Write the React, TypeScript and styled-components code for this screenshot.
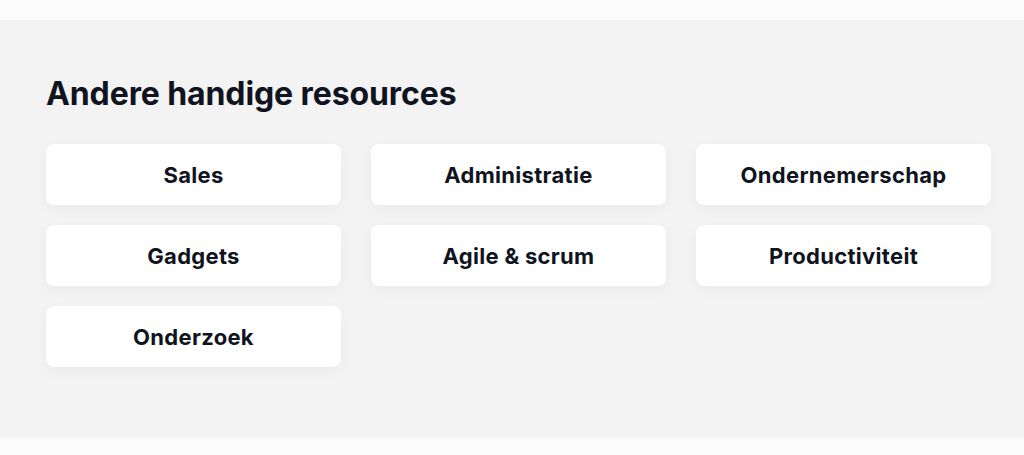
import React from 'react'
import styled, { createGlobalStyle } from 'styled-components'

const GlobalStyle = createGlobalStyle`
  body {
    margin: 0;
    background: #fbfbfb;
    font-family: 'Inter', 'Liberation Sans', sans-serif;
  }
`

const TopBand = styled.div`
  height: 20px;
  background: #fbfbfb;
`

const Section = styled.section`
  background: #f3f3f3;
  padding: 54px 33px 71px 46px;
`

const Title = styled.h2`
  margin: 0 0 30px;
  font-size: 32px;
  line-height: 40px;
  font-weight: 700;
  color: #0f1420;
  letter-spacing: -0.1px;
`

const Grid = styled.div`
  display: grid;
  grid-template-columns: repeat(3, 295px);
  column-gap: 30px;
  row-gap: 20px;
`

const Card = styled.a`
  height: 61px;
  display: flex;
  align-items: center;
  justify-content: center;
  background: #ffffff;
  border-radius: 8px;
  box-shadow: 0 4px 14px rgba(0, 0, 0, 0.04);
  font-size: 22px;
  font-weight: 700;
  letter-spacing: 0.3px;
  color: #0f1420;
  text-decoration: none;
`

const items = [
  'Sales',
  'Administratie',
  'Ondernemerschap',
  'Gadgets',
  'Agile & scrum',
  'Productiviteit',
  'Onderzoek',
]

export default function App() {
  return (
    <>
      <GlobalStyle />
      <TopBand />
      <Section>
        <Title>Andere handige resources</Title>
        <Grid>
          {items.map((item) => (
            <Card key={item} href="#">{item}</Card>
          ))}
        </Grid>
      </Section>
    </>
  )
}
